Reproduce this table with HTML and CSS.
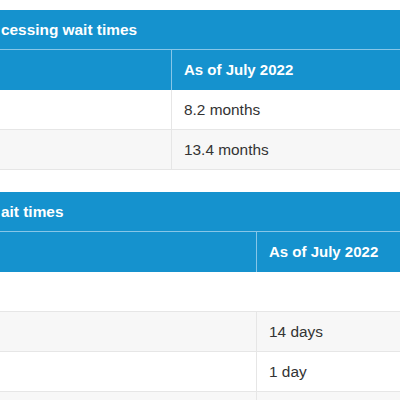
FILE: index.html
```html
<!DOCTYPE html>
<html lang="en">
<head>
<meta charset="utf-8">
<title>Wait times</title>
<link rel="stylesheet" href="styles.css">
</head>
<body>
<main class="page">
  <section class="tbl tbl-a">
    <div class="title">cessing wait times</div>
    <div class="row head"><div class="cell"></div><div class="cell">As of July 2022</div></div>
    <div class="row"><div class="cell"></div><div class="cell">8.2 months</div></div>
    <div class="row alt"><div class="cell"></div><div class="cell">13.4 months</div></div>
  </section>
  <section class="tbl tbl-b">
    <div class="title">ait times</div>
    <div class="row head"><div class="cell"></div><div class="cell">As of July 2022</div></div>
    <div class="row span"><div class="cell wide"></div></div>
    <div class="row alt"><div class="cell"></div><div class="cell">14 days</div></div>
    <div class="row"><div class="cell"></div><div class="cell">1 day</div></div>
    <div class="row alt last"><div class="cell"></div><div class="cell"></div></div>
  </section>
</main>
</body>
</html>
```
FILE: styles.css
```css
* { box-sizing: border-box; }
html, body {
  margin: 0;
  padding: 0;
  background: #ffffff;
  overflow: hidden;
}
.page {
  width: 400px;
  height: 400px;
  overflow: hidden;
  padding-top: 10px;
  font-family: "Liberation Sans", Arial, Helvetica, sans-serif;
  font-size: 15.4px;
  color: #333333;
}
.tbl {
  display: flex;
  flex-direction: column;
}
.tbl-a { --c1: 172px; }
.tbl-b { --c1: 257px; margin-top: 22px; }
.title {
  height: 40px;
  line-height: 39px;
  background: #1592ce;
  color: #ffffff;
  font-weight: bold;
  padding-left: 1px;
  border-bottom: 1px solid #86c6e8;
  white-space: nowrap;
}
.row {
  display: grid;
  grid-template-columns: var(--c1) 1fr;
  height: 40px;
  line-height: 39px;
  border-bottom: 1px solid #e6e6e6;
  background: #ffffff;
}
.row.alt { background: #f7f7f7; }
.row.last { height: 8px; border-bottom: none; }
.row.span { grid-template-columns: 1fr; }
.cell {
  padding-left: 12px;
  white-space: nowrap;
}
.cell:first-child { border-right: 1px solid #e6e6e6; }
.cell.wide { border-right: none; }
.row.head {
  background: #1592ce;
  color: #ffffff;
  font-weight: bold;
  border-bottom: none;
  line-height: 40px;
  font-size: 15px;
}
.row.head .cell:first-child { border-right-color: #86c6e8; }
```
